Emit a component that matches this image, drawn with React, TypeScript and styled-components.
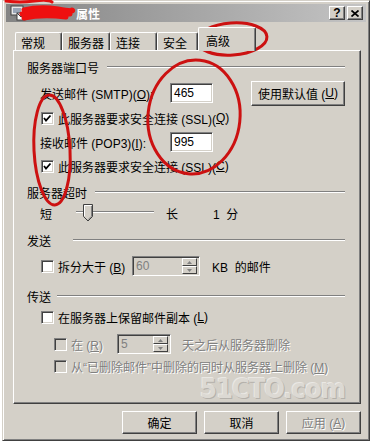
import styled, { createGlobalStyle } from 'styled-components';

const GlobalStyle = createGlobalStyle`
  body {
    margin: 0;
    background: #fff;
    font-family: "Liberation Sans", "Noto Sans CJK SC", sans-serif;
    font-size: 12px;
    color: #000;
  }
`;

const Page = styled.div`
  position: relative;
  width: 371px;
  height: 441px;
  overflow: hidden;
`;

const Window = styled.div`
  box-sizing: border-box;
  width: 368px;
  height: 441px;
  margin-left: 2px;
  padding: 3px;
  background: #d4d0c8;
  border-top: 1px solid #d4d0c8;
  border-left: 1px solid #d4d0c8;
  border-right: 1px solid #404040;
  border-bottom: 1px solid #404040;
  box-shadow: inset 1px 1px #fff, inset -1px -1px #808080;
`;

const TitleBar = styled.div`
  display: flex;
  align-items: center;
  height: 18px;
  padding: 0 3px 0 4px;
  background: linear-gradient(to right, #848484, #c4c4c4);
  color: #fff;
  font-weight: bold;
`;

const TitleText = styled.span`
  margin-left: 50px;
  flex: 1;
`;

const CapButton = styled.div<{ $gap?: number }>`
  box-sizing: border-box;
  width: 16px;
  height: 14px;
  margin-left: ${(p) => p.$gap ?? 0}px;
  display: flex;
  align-items: center;
  justify-content: center;
  background: #d4d0c8;
  border-top: 1px solid #fff;
  border-left: 1px solid #fff;
  border-right: 1px solid #404040;
  border-bottom: 1px solid #404040;
  box-shadow: inset -1px -1px #808080;
  color: #000;
  font: bold 12px "Liberation Sans", sans-serif;
`;

const Body = styled.div`
  padding: 0 5px 0 7px;
`;

const TabRow = styled.div`
  display: flex;
  align-items: flex-end;
  height: 23px;
  margin-top: 5px;
  padding-left: 2px;
  position: relative;
  z-index: 1;
`;

const Tab = styled.div<{ $w: number; $active?: boolean }>`
  box-sizing: border-box;
  width: ${(p) => p.$w}px;
  height: ${(p) => (p.$active ? 24 : 18)}px;
  margin-bottom: ${(p) => (p.$active ? -1 : 0)}px;
  padding: ${(p) => (p.$active ? '4px 0 0 7px' : '1px 0 0 5px')};
  background: #d4d0c8;
  border-top: 1px solid #fff;
  border-left: 1px solid #fff;
  border-right: 1px solid #404040;
  border-top-left-radius: 2px;
  border-top-right-radius: 2px;
  box-shadow: inset -1px 0 #808080;
`;

const Panel = styled.div`
  box-sizing: border-box;
  width: 348px;
  height: 354px;
  padding: 9px 15px 0 13px;
  border-top: 1px solid #fff;
  border-left: 1px solid #fff;
  border-right: 1px solid #404040;
  border-bottom: 1px solid #404040;
  box-shadow: inset -1px -1px #808080;
`;

const GroupHead = styled.div<{ $mt: number; $gap?: number }>`
  display: flex;
  align-items: center;
  height: 14px;
  margin-top: ${(p) => p.$mt}px;
  &::after {
    content: '';
    flex: 1;
    margin-left: ${(p) => p.$gap ?? 7}px;
    border-top: 1px solid #808080;
    border-bottom: 1px solid #fff;
  }
`;

const Row = styled.div<{ $mt: number; $h?: number; $indent?: number }>`
  display: flex;
  align-items: center;
  height: ${(p) => p.$h ?? 16}px;
  margin-top: ${(p) => p.$mt}px;
  padding-left: ${(p) => p.$indent ?? 13}px;
  white-space: nowrap;
`;

const Label = styled.span<{ $w?: number; $off?: boolean; $ml?: number }>`
  display: inline-block;
  width: ${(p) => (p.$w ? `${p.$w}px` : 'auto')};
  margin-left: ${(p) => p.$ml ?? 0}px;
  color: ${(p) => (p.$off ? '#808080' : '#000')};
  text-shadow: ${(p) => (p.$off ? '1px 1px #fff' : 'none')};
`;

const Key = styled.u`
  text-underline-offset: 1px;
`;

const Field = styled.div<{ $w: number; $off?: boolean }>`
  box-sizing: border-box;
  display: flex;
  align-items: center;
  width: ${(p) => p.$w}px;
  height: 20px;
  padding-left: 3px;
  background: ${(p) => (p.$off ? '#d4d0c8' : '#fff')};
  color: ${(p) => (p.$off ? '#808080' : '#000')};
  border-top: 1px solid #808080;
  border-left: 1px solid #808080;
  border-right: 1px solid #fff;
  border-bottom: 1px solid #fff;
  box-shadow: inset 1px 1px #404040, inset -1px -1px #d4d0c8;
`;

const SpinCol = styled.div`
  display: flex;
  flex-direction: column;
  margin-left: auto;
  margin-right: 2px;
`;

const SpinBtn = styled.div`
  box-sizing: border-box;
  width: 15px;
  height: 8px;
  display: flex;
  align-items: center;
  justify-content: center;
  background: #d4d0c8;
  border-top: 1px solid #fff;
  border-left: 1px solid #fff;
  border-right: 1px solid #404040;
  border-bottom: 1px solid #404040;
`;

const Box = styled.div<{ $off?: boolean }>`
  box-sizing: border-box;
  width: 13px;
  height: 13px;
  margin-right: 4px;
  display: flex;
  align-items: center;
  justify-content: center;
  background: ${(p) => (p.$off ? '#d4d0c8' : '#fff')};
  border-top: 1px solid #808080;
  border-left: 1px solid #808080;
  border-right: 1px solid #fff;
  border-bottom: 1px solid #fff;
  box-shadow: inset 1px 1px #404040, inset -1px -1px #d4d0c8;
`;

const Button = styled.div<{ $off?: boolean }>`
  box-sizing: border-box;
  height: 23px;
  padding: 0 6px;
  display: flex;
  align-items: center;
  justify-content: center;
  background: #d4d0c8;
  border-top: 1px solid #fff;
  border-left: 1px solid #fff;
  border-right: 1px solid #404040;
  border-bottom: 1px solid #404040;
  box-shadow: inset -1px -1px #808080;
  color: ${(p) => (p.$off ? '#808080' : '#000')};
  text-shadow: ${(p) => (p.$off ? '1px 1px #fff' : 'none')};
`;

const DefaultBtn = styled(Button)`
  margin-left: auto;
  height: 25px;
`;

const Footer = styled.div`
  display: flex;
  justify-content: flex-end;
  gap: 7px;
  margin-top: 7px;
  & > div {
    width: 75px;
  }
`;

const Slider = styled.div`
  position: relative;
  width: 78px;
  height: 18px;
  &::before {
    content: '';
    position: absolute;
    left: 0;
    right: 0;
    top: 7px;
    border-top: 1px solid #808080;
    border-bottom: 1px solid #fff;
    box-shadow: 0 -1px 0 #d4d0c8;
  }
`;

const Thumb = styled.svg`
  position: absolute;
  left: 7px;
  top: 0;
`;

const Watermark = styled.div`
  margin-top: 1px;
  height: 28px;
  text-align: right;
  font: bold 27px/28px "DejaVu Sans Condensed", "DejaVu Sans", sans-serif;
  letter-spacing: -1px;
  color: #dcd9d3;
  text-shadow: 1px 1px 0 #b4b1ab, -1px -1px 0 #eae8e4;
`;

const Overlay = styled.svg`
  position: absolute;
  left: 0;
  top: 0;
  pointer-events: none;
`;

const Check = ({ off }: { off?: boolean }) => (
  <svg width="9" height="9" viewBox="0 0 9 9">
    <polyline points="1,4 3,6.5 7.5,1.5" fill="none" stroke={off ? '#808080' : '#000'} strokeWidth="1.8" />
  </svg>
);

const Arrow = ({ up }: { up?: boolean }) => (
  <svg width="5" height="3" viewBox="0 0 5 3">
    <polygon points={up ? '2.5,0 5,3 0,3' : '0,0 5,0 2.5,3'} fill="#808080" />
  </svg>
);

const SpinField = ({ w, value }: { w: number; value: string }) => (
  <Field $w={w} $off>
    {value}
    <SpinCol>
      <SpinBtn>
        <Arrow up />
      </SpinBtn>
      <SpinBtn>
        <Arrow />
      </SpinBtn>
    </SpinCol>
  </Field>
);

export default function App() {
  return (
    <>
      <GlobalStyle />
      <Page>
        <Window>
          <TitleBar>
            <svg width="16" height="16" viewBox="0 0 16 16">
              <rect x="1" y="1" width="12" height="9" fill="#e8e8e8" stroke="#404040" />
              <rect x="3" y="3" width="8" height="5" fill="#9aa6b8" />
              <rect x="4" y="11" width="6" height="2" fill="#808080" />
              <rect x="7" y="8" width="8" height="7" fill="#fff" stroke="#404040" />
              <polyline points="7,8 11,12 15,8" fill="none" stroke="#404040" />
            </svg>
            <TitleText>属性</TitleText>
            <CapButton>?</CapButton>
            <CapButton $gap={2}>
              <svg width="8" height="7" viewBox="0 0 8 7">
                <path d="M0.5 0.5 L7.5 6.5 M7.5 0.5 L0.5 6.5" stroke="#000" strokeWidth="1.7" />
              </svg>
            </CapButton>
          </TitleBar>
          <Body>
            <TabRow>
              <Tab $w={47}>常规</Tab>
              <Tab $w={48}>服务器</Tab>
              <Tab $w={47}>连接</Tab>
              <Tab $w={41}>安全</Tab>
              <Tab $w={58} $active>
                高级
              </Tab>
            </TabRow>
            <Panel>
              <GroupHead $mt={0} $gap={8}>
                服务器端口号
              </GroupHead>
              <Row $mt={9} $h={20}>
                <Label $w={130}>
                  发送邮件 (SMTP)(<Key>O</Key>):
                </Label>
                <Field $w={43}>465</Field>
                <DefaultBtn>
                  使用默认值 (<Key>U</Key>)
                </DefaultBtn>
              </Row>
              <Row $mt={7} $indent={14}>
                <Box>
                  <Check />
                </Box>
                此服务器要求安全连接 (SSL)(<Key>Q</Key>)
              </Row>
              <Row $mt={6} $h={20}>
                <Label $w={130}>
                  接收邮件 (POP3)(<Key>I</Key>):
                </Label>
                <Field $w={43}>995</Field>
              </Row>
              <Row $mt={6} $indent={14}>
                <Box>
                  <Check />
                </Box>
                此服务器要求安全连接 (SSL)(<Key>C</Key>)
              </Row>

              <GroupHead $mt={11} $gap={8}>
                服务器超时
              </GroupHead>
              <Row $mt={5} $h={18}>
                <Label $w={36}>短</Label>
                <Slider>
                  <Thumb width="10" height="18" viewBox="0 0 10 18">
                    <polygon points="0.5,0.5 9.5,0.5 9.5,12.5 5,17 0.5,12.5" fill="#d4d0c8" stroke="#404040" />
                    <polyline points="1.5,12 1.5,1.5 8.5,1.5" fill="none" stroke="#fff" />
                    <polyline points="8.5,2 8.5,12.2 5,15.7" fill="none" stroke="#808080" />
                  </Thumb>
                </Slider>
                <Label $w={47} $ml={12}>
                  长
                </Label>
                1&nbsp;&nbsp;分
              </Row>

              <GroupHead $mt={11} $gap={22}>
                发送
              </GroupHead>
              <Row $mt={9} $h={20} $indent={14}>
                <Box />
                <Label $w={74}>
                  拆分大于 (<Key>B</Key>)
                </Label>
                <SpinField w={68} value="60" />
                <Label $ml={12}>KB&nbsp;&nbsp;的邮件</Label>
              </Row>

              <GroupHead $mt={13} $gap={6}>
                传送
              </GroupHead>
              <Row $mt={6} $indent={14}>
                <Box />
                在服务器上保留邮件副本 (<Key>L</Key>)
              </Row>
              <Row $mt={9} $h={20} $indent={27}>
                <Box $off />
                <Label $w={46} $off>
                  在 (<Key>R</Key>)
                </Label>
                <SpinField w={54} value="5" />
                <Label $off $ml={11}>
                  天之后从服务器删除
                </Label>
              </Row>
              <Row $mt={4} $indent={27}>
                <Box $off />
                <Label $off>
                  从“已删除邮件”中删除的同时从服务器上删除 (<Key>M</Key>)
                </Label>
              </Row>

              <Watermark>51CTO.com</Watermark>
            </Panel>
            <Footer>
              <Button>确定</Button>
              <Button>取消</Button>
              <Button $off>
                应用 (<Key>A</Key>)
              </Button>
            </Footer>
          </Body>
        </Window>

        <Overlay width="371" height="441" viewBox="0 0 371 441">
          {/* redaction scribbles */}
          <path d="M6 1 Q20 3 34 1 T52 2" stroke="#e01010" strokeWidth="3" fill="none" strokeLinecap="round" />
          <path
            d="M24 10 Q40 6 58 9 T72 10 M22 14 Q44 10 70 14 M24 18 Q42 14 66 17"
            stroke="#ee1010"
            strokeWidth="5"
            fill="none"
            strokeLinecap="round"
          />
          {/* annotation circles */}
          <ellipse cx="232" cy="39" rx="35" ry="16" transform="rotate(-4 232 39)" stroke="#cc1111" strokeWidth="3" fill="none" />
          <ellipse cx="194" cy="117" rx="46" ry="57" transform="rotate(6 194 117)" stroke="#cc1111" strokeWidth="3" fill="none" />
          <ellipse cx="52" cy="150" rx="18" ry="55" transform="rotate(-3 52 150)" stroke="#cc1111" strokeWidth="3" fill="none" />
        </Overlay>
      </Page>
    </>
  );
}
